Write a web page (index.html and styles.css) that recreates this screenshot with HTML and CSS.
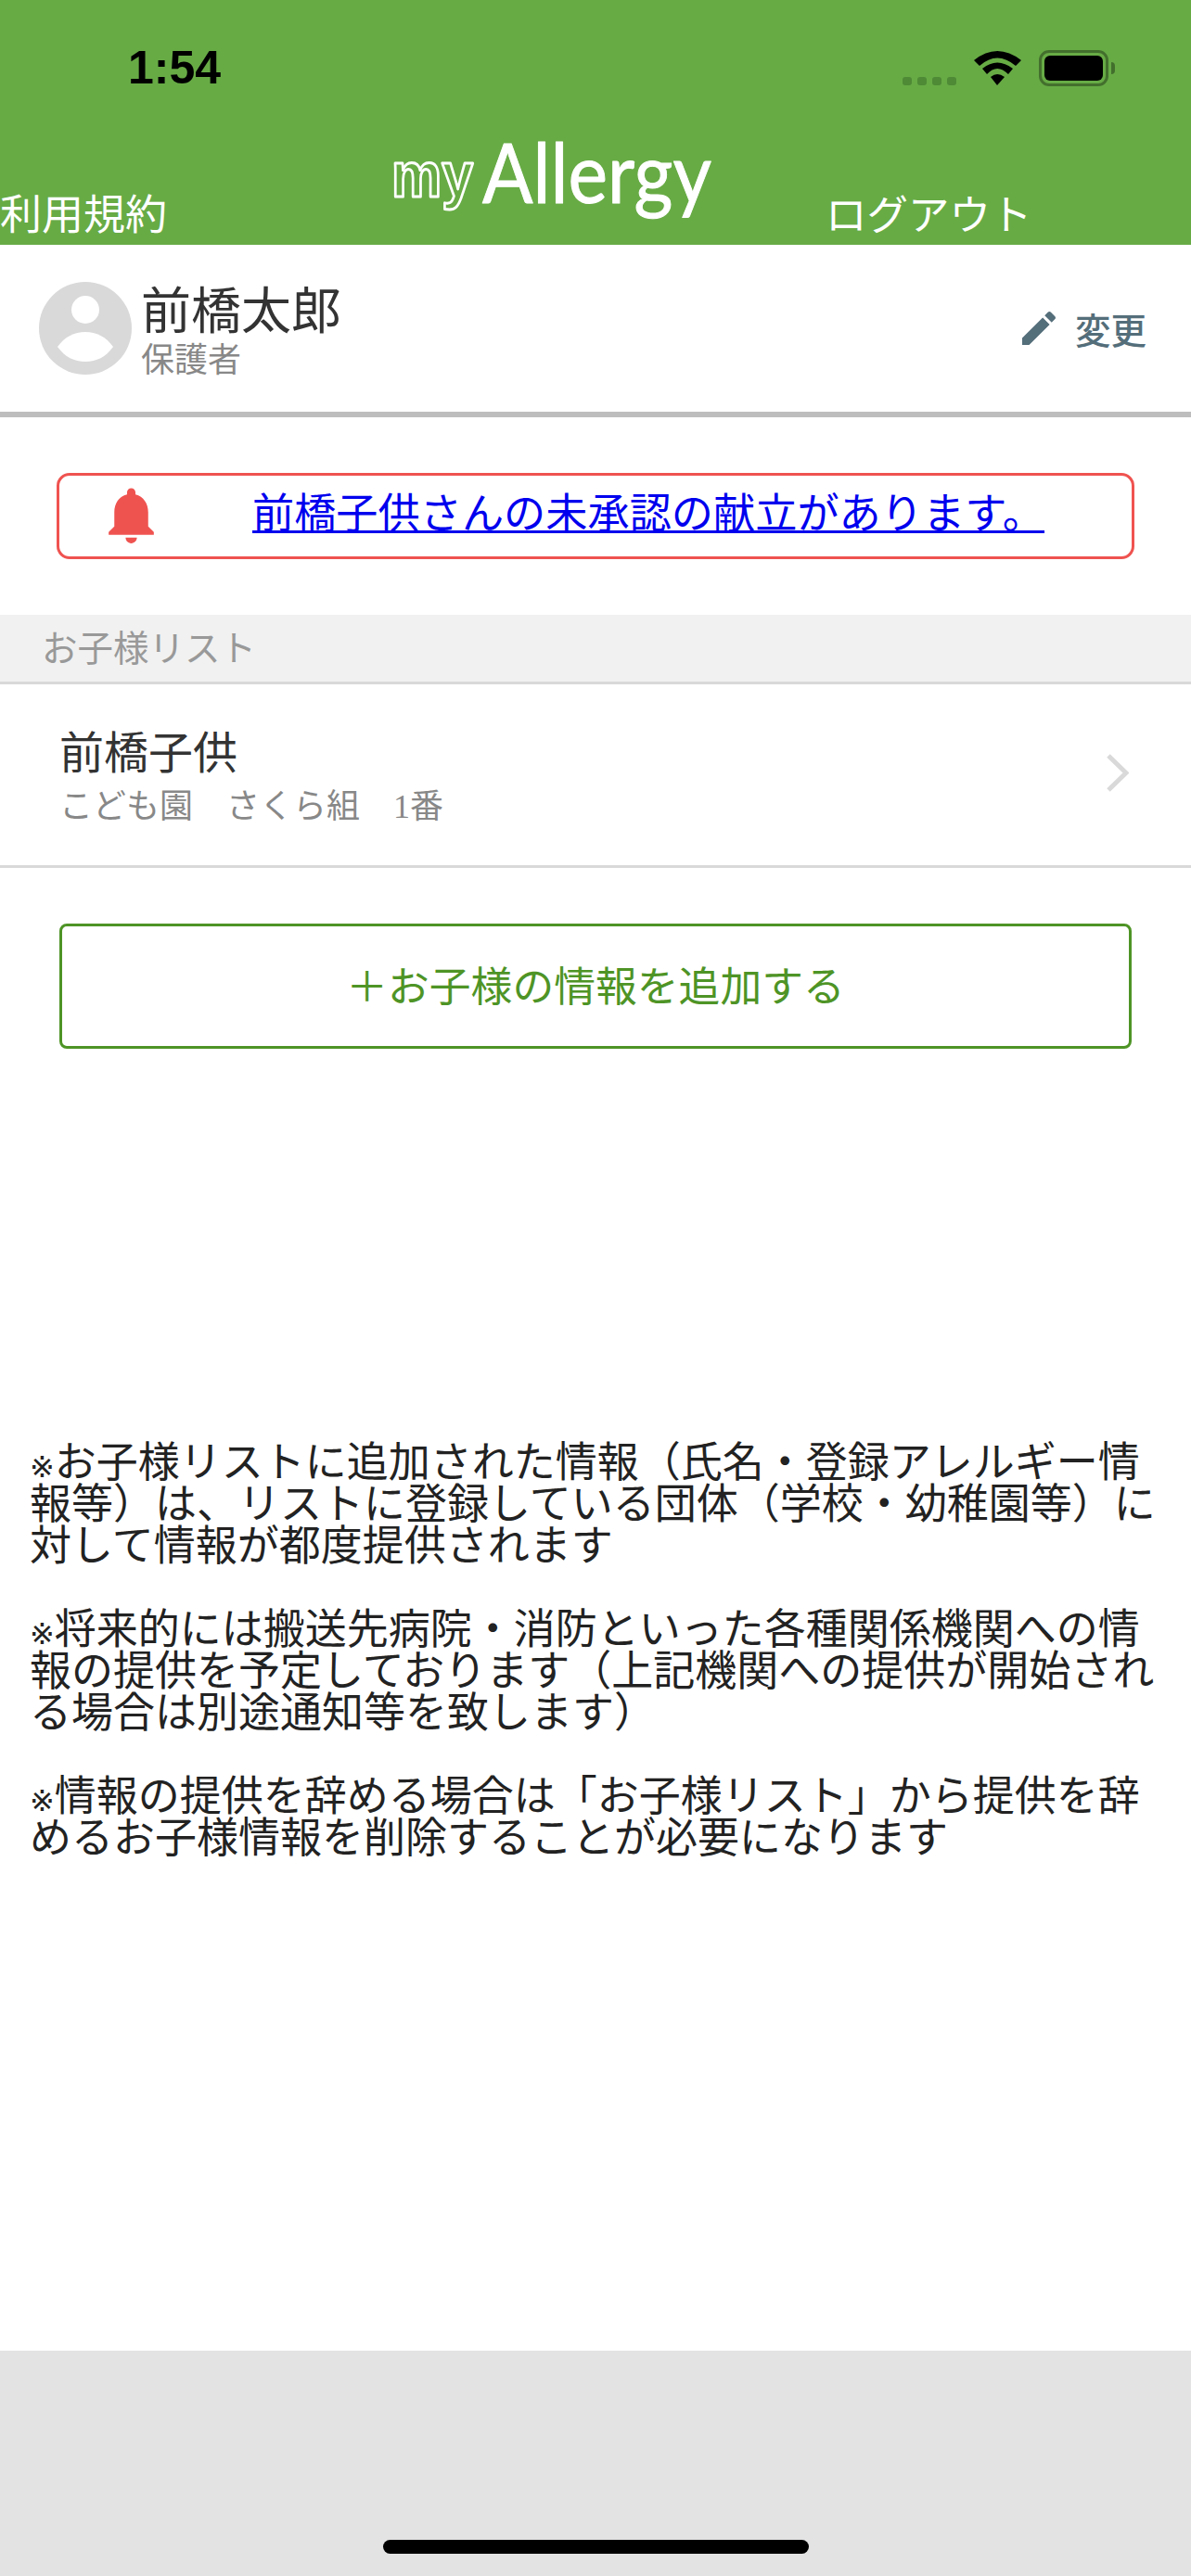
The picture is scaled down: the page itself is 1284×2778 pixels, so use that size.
FILE: index.html
```html
<!DOCTYPE html>
<html lang="ja">
<head>
    <meta charset="UTF-8">
    <meta name="viewport" content="width=device-width, initial-scale=1.0">
    <title>myAllergy</title>
    <link rel="stylesheet" href="styles.css">
</head>
<body>

    <div class="app">
        <header class="top">
            <div class="status">
                <span class="time">1:54</span>
                <div class="status-icons">
                    <div class="dots"><i></i><i></i><i></i><i></i></div>
                    <svg class="wifi" viewBox="0 0 51 37">
                        <path d="M0 10Q25 -10 51 10L45 16Q25 -1 6 16Z"/>
                        <path d="M9 19Q25 6 42 19L37 25Q25 13 14 25Z"/>
                        <path d="M18 28Q25 22 33 28L25 37Z"/>
                    </svg>
                    <div class="battery"><div class="battery-level"></div></div>
                    <div class="battery-nub"></div>
                </div>
            </div>
            <nav class="nav">
                <a class="nav-link">利用規約</a>
                <svg class="logo" viewBox="0 0 410 126">
                    <text class="logo-my" x="2" y="85" textLength="88" lengthAdjust="spacingAndGlyphs">my</text>
                    <text class="logo-main" x="100" y="92" textLength="247" lengthAdjust="spacingAndGlyphs">Allergy</text>
                </svg>
                <a class="nav-link nav-logout">ログアウト</a>
            </nav>
        </header>

        <section class="profile">
            <div class="profile-user">
                <svg class="avatar" viewBox="0 0 100 100">
                    <circle cx="50" cy="50" r="50" fill="#d9d9d9"/>
                    <circle cx="50" cy="30" r="15" fill="#fff"/>
                    <path d="M20 70C28 59 38 54 50 54S72 59 80 70C72 81 62 86 50 86S28 81 20 70Z" fill="#fff"/>
                </svg>
                <div>
                    <div class="profile-name">前橋太郎</div>
                    <div class="profile-role">保護者</div>
                </div>
            </div>
            <a class="edit">
                <svg class="edit-icon" viewBox="0 0 24 24">
                    <path d="M3 17.25V21h3.75L17.81 9.94l-3.75-3.75L3 17.25zM20.71 7.04c.39-.39.39-1.02 0-1.41l-2.34-2.34c-.39-.39-1.02-.39-1.41 0l-1.83 1.83 3.75 3.75 1.83-1.83z"/>
                </svg>
                変更
            </a>
        </section>

        <div class="alert">
            <svg class="bell" viewBox="0 0 24 24">
                <path d="M12 22c1.1 0 2-.9 2-2h-4c0 1.1.89 2 2 2zm6-6v-5c0-3.07-1.64-5.64-4.5-6.32V4c0-.83-.67-1.5-1.5-1.5s-1.5.67-1.5 1.5v.68C7.63 5.36 6 7.92 6 11v5l-2 2v1h16v-1l-2-2z"/>
            </svg>
            <a class="alert-link" href="#">前橋子供さんの未承認の献立があります。</a>
        </div>

        <div class="list-title">お子様リスト</div>
        <div class="child-row">
            <div>
                <div class="child-name">前橋子供</div>
                <div class="child-info">こども園　さくら組　<span class="child-no">1</span>番</div>
            </div>
            <svg class="chevron" viewBox="0 0 24 41">
                <path d="M2 2L21 20.5L2 39"/>
            </svg>
        </div>

        <a class="add-button">＋お子様の情報を追加する</a>

        <p class="notes">
            <span class="mark">※</span>お子様リストに追加された情報（氏名・登録アレルギー情報等）は、リストに登録している団体（学校・幼稚園等）に対して情報が都度提供されます<br><br>
            <span class="mark">※</span>将来的には搬送先病院・消防といった各種関係機関への情報の提供を予定しております（上記機関への提供が開始される場合は別途通知等を致します）<br><br>
            <span class="mark">※</span>情報の提供を辞める場合は「お子様リスト」から提供を辞めるお子様情報を削除することが必要になります
        </p>

        <footer class="footer">
            <div class="home-bar"></div>
        </footer>
    </div>

</body>
</html>
```
FILE: styles.css
```css
body {
    margin: 0;
    background-color: #fff;
    font-family: "Noto Sans CJK JP", "Liberation Sans", sans-serif;
}

.app {
    display: flex;
    flex-direction: column;
    height: 2778px;
    overflow: hidden;
}

.top {
    height: 264px;
    background-color: #67ab45;
}

.status {
    display: flex;
    justify-content: space-between;
    align-items: center;
    height: 40px;
    padding: 53px 82px 0 138px;
}

.time {
    font-family: "Liberation Sans", sans-serif;
    font-weight: bold;
    font-size: 50px;
    line-height: 40px;
    color: #000;
}

.status-icons {
    display: flex;
    align-items: center;
}

.dots {
    display: flex;
    gap: 6px;
    align-self: flex-end;
    margin-right: 19px;
    margin-bottom: 1px;
}

.dots i {
    width: 10px;
    height: 9px;
    border-radius: 3px;
    background-color: #4f8a36;
}

.wifi {
    width: 51px;
    height: 37px;
    margin-right: 19px;
}

.battery {
    box-sizing: border-box;
    width: 75px;
    height: 39px;
    padding: 3px;
    border: 3px solid #436f2d;
    border-radius: 11px;
}

.battery-level {
    height: 100%;
    border-radius: 6px;
    background-color: #000;
}

.battery-nub {
    width: 4px;
    height: 13px;
    margin-left: 3px;
    border-radius: 0 7px 7px 0;
    background-color: #436f2d;
}

.nav {
    display: flex;
    align-items: flex-start;
    padding-top: 34px;
}

.nav-link {
    margin-top: 80px;
    font-size: 45px;
    line-height: 44px;
    color: #fff;
}

.logo {
    width: 410px;
    height: 126px;
    margin-left: 240px;
}

.logo-my {
    font-family: "Liberation Sans", sans-serif;
    font-weight: bold;
    font-size: 68px;
    fill: #67ab45;
    stroke: #fff;
    stroke-width: 3px;
    stroke-linejoin: round;
}

.logo-main {
    font-family: Lato, sans-serif;
    font-weight: 400;
    font-size: 90px;
    fill: #fff;
    stroke: #fff;
    stroke-width: 1px;
    stroke-linejoin: round;
}

.nav-logout {
    margin-left: 60px;
    font-size: 44.5px;
}

.profile {
    display: flex;
    justify-content: space-between;
    align-items: center;
    height: 180px;
    padding: 0 48px 0 42px;
    border-bottom: 6px solid #bdbdbd;
}

.profile-user {
    display: flex;
    align-items: center;
    gap: 10px;
}

.avatar {
    width: 100px;
    height: 100px;
}

.profile-name {
    font-size: 54px;
    line-height: 54px;
    color: #333;
}

.profile-role {
    margin-top: 8px;
    font-size: 36px;
    line-height: 36px;
    color: #888;
}

.edit {
    display: flex;
    align-items: center;
    font-size: 38.5px;
    font-weight: 500;
    color: #546e7a;
}

.edit-icon {
    width: 48px;
    height: 48px;
    margin-right: 15px;
    fill: #546e7a;
}

.alert {
    box-sizing: border-box;
    display: flex;
    align-items: center;
    width: 1162px;
    height: 93px;
    margin: 60px 0 60px 61px;
    padding-left: 41px;
    border: 3px solid #ef5350;
    border-radius: 14px;
}

.bell {
    width: 73px;
    height: 73px;
    margin-right: 94px;
    margin-bottom: 3px;
    fill: #ef5350;
}

.alert-link {
    margin-bottom: 12px;
    font-size: 45.2px;
    line-height: 50px;
    color: #0000ee;
    text-decoration-thickness: 3px;
}

.list-title {
    height: 72px;
    padding-left: 45px;
    border-bottom: 3px solid #d9d9d9;
    background-color: #f1f1f1;
    font-size: 38.5px;
    line-height: 66px;
    color: #999;
}

.child-row {
    display: flex;
    justify-content: space-between;
    align-items: center;
    height: 195px;
    padding: 0 67px 0 64px;
    border-bottom: 3px solid #d9d9d9;
}

.child-name {
    font-size: 48px;
    line-height: 56px;
    color: #333;
}

.child-info {
    margin-top: 8px;
    font-size: 36px;
    line-height: 44px;
    color: #888;
}

.child-no {
    font-family: "Liberation Serif", serif;
}

.chevron {
    width: 24px;
    height: 41px;
    margin-bottom: 4px;
    fill: none;
    stroke: #d9d9d9;
    stroke-width: 5px;
}

.add-button {
    box-sizing: border-box;
    display: flex;
    justify-content: center;
    align-items: center;
    width: 1156px;
    height: 135px;
    margin: 60px 0 0 64px;
    padding-bottom: 6px;
    border: 3px solid #4e9426;
    border-radius: 8px;
    font-size: 44.8px;
    color: #4e9426;
}

.notes {
    width: 1222px;
    margin: 420px 0 0 32px;
    font-size: 45px;
    line-height: 45px;
    color: #222;
}

.mark {
    font-family: "DejaVu Sans", sans-serif;
    font-size: 32px;
    line-height: 0;
}

.footer {
    display: flex;
    justify-content: center;
    align-items: flex-end;
    box-sizing: border-box;
    height: 243px;
    margin-top: auto;
    padding-bottom: 24px;
    background-color: #e3e3e3;
}

.home-bar {
    width: 459px;
    height: 15px;
    border-radius: 8px;
    background-color: #000;
}
```
